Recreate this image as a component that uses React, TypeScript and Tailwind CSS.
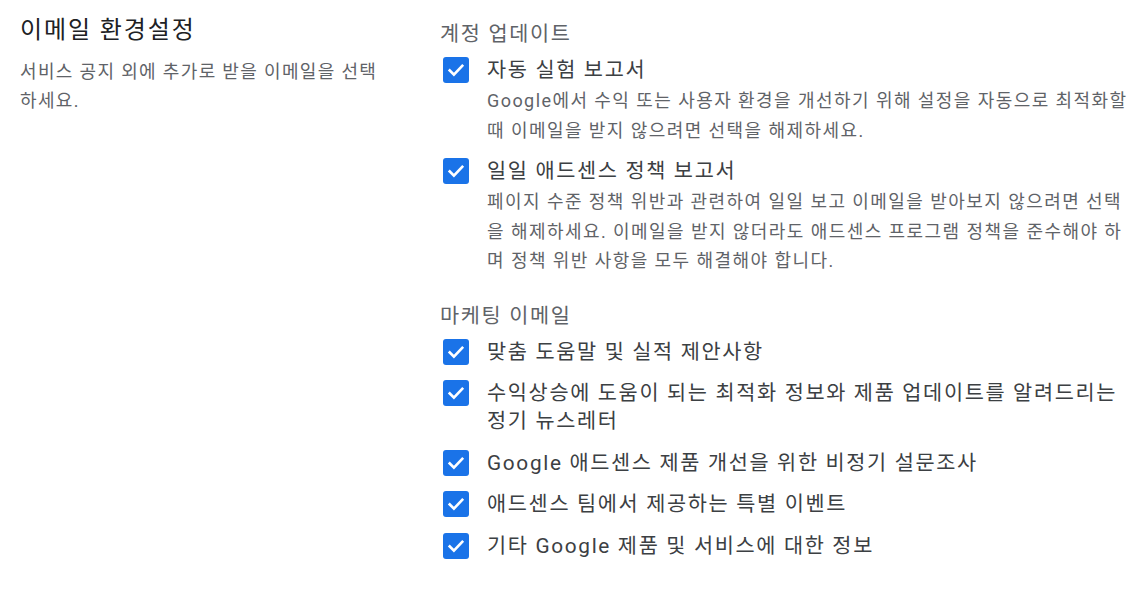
const accountItems = [
  {
    label: "자동 실험 보고서",
    desc: "Google에서 수익 또는 사용자 환경을 개선하기 위해 설정을 자동으로 최적화할 때 이메일을 받지 않으려면 선택을 해제하세요.",
  },
  {
    label: "일일 애드센스 정책 보고서",
    desc: "페이지 수준 정책 위반과 관련하여 일일 보고 이메일을 받아보지 않으려면 선택을 해제하세요. 이메일을 받지 않더라도 애드센스 프로그램 정책을 준수해야 하며 정책 위반 사항을 모두 해결해야 합니다.",
  },
];

const marketingItems = [
  { label: "맞춤 도움말 및 실적 제안사항" },
  { label: "수익상승에 도움이 되는 최적화 정보와 제품 업데이트를 알려드리는 정기 뉴스레터" },
  { label: "Google 애드센스 제품 개선을 위한 비정기 설문조사" },
  { label: "애드센스 팀에서 제공하는 특별 이벤트" },
  { label: "기타 Google 제품 및 서비스에 대한 정보" },
];

function CheckBox() {
  return (
    <div className="w-[26px] h-[26px] shrink-0 rounded-[3px] bg-[#1a73e8] flex items-center justify-center mt-[1px]">
      <svg width="20" height="20" viewBox="0 0 24 24" fill="none">
        <path d="M4.5 12.5l5 5L19.5 7" stroke="white" strokeWidth="3.2" strokeLinecap="square" />
      </svg>
    </div>
  );
}

function Item({ label, desc }: { label: string; desc?: string }) {
  return (
    <div className="flex gap-[18px] pl-[3px]">
      <CheckBox />
      <div>
        <div className="text-[20.8px] leading-[28px] tracking-[0.08em] text-[#3c4043]">{label}</div>
        {desc && (
          <p className="mt-[2px] text-[18px] leading-[29.5px] tracking-[0.08em] text-[#5f6368]">{desc}</p>
        )}
      </div>
    </div>
  );
}

export default function App() {
  return (
    <div
      className="flex w-[1144px] h-[593px] bg-white"
      style={{ fontFamily: "Roboto, 'Noto Sans CJK KR', sans-serif" }}
    >
      <div className="w-[440px] shrink-0 pl-[20px] pt-[14px] pr-[55px]">
        <h2 className="text-[24px] leading-[32px] tracking-[0.08em] text-[#202124]">이메일 환경설정</h2>
        <p className="mt-[11px] text-[18px] leading-[29px] tracking-[0.075em] text-[#5f6368]">
          서비스 공지 외에 추가로 받을 이메일을 선택하세요.
        </p>
      </div>
      <div className="flex-1 pt-[20px] pr-[14px]">
        <div className="text-[20.8px] leading-[28px] tracking-[0.08em] text-[#5f6368] mb-[8px]">계정 업데이트</div>
        <div className="flex flex-col gap-[12px]">
          {accountItems.map((it) => (
            <Item key={it.label} label={it.label} desc={it.desc} />
          ))}
        </div>
        <div className="mt-[26px] text-[20.8px] leading-[28px] tracking-[0.08em] text-[#5f6368] mb-[8px]">마케팅 이메일</div>
        <div className="flex flex-col gap-[13.5px]">
          {marketingItems.map((it) => (
            <Item key={it.label} label={it.label} />
          ))}
        </div>
      </div>
    </div>
  );
}
